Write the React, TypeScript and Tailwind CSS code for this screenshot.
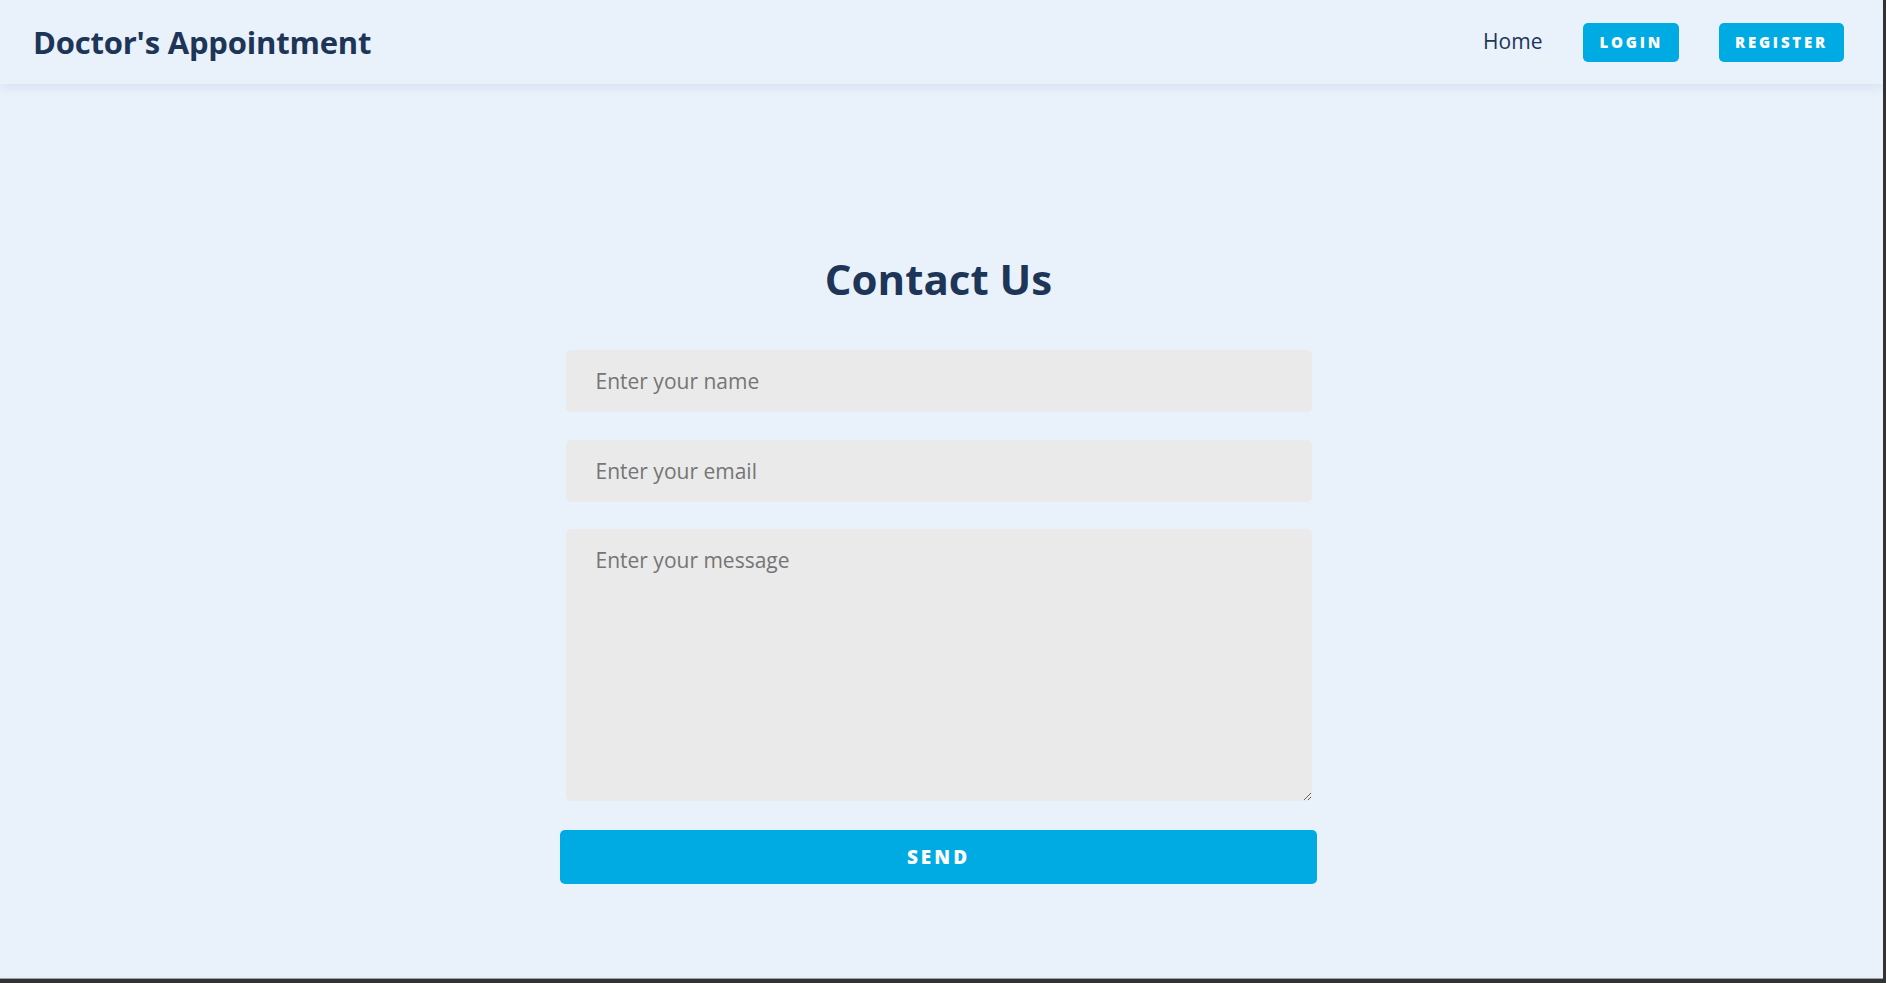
import React from 'react'

const font = { fontFamily: '"Open Sans", "Noto Sans", sans-serif' }

const Navbar: React.FC = () => {
  return (
    <header className="h-[84px] flex items-center justify-between pl-[33px] pr-[39px] bg-[#e9f1fb] shadow-[0_4px_10px_rgba(30,60,110,0.08)] relative z-10">
      <h1 className="text-[31px] font-bold text-[#1d3557] tracking-[-0.2px]">Doctor's Appointment</h1>
      <nav className="flex items-center">
        <a href="#" className="text-[21px] text-[#1d3557] mr-[41px]">Home</a>
        <button className="h-[39px] px-[16px] rounded-[5px] bg-[#00abe3] text-white text-[15px] font-extrabold tracking-[2.8px] mr-[40px]">
          LOGIN
        </button>
        <button className="h-[39px] px-[16px] rounded-[5px] bg-[#00abe3] text-white text-[15px] font-extrabold tracking-[2.8px]">
          REGISTER
        </button>
      </nav>
    </header>
  )
}

const ContactForm: React.FC = () => {
  return (
    <div className="w-[757px] mx-auto flex flex-col">
      <h2 className="text-[42px] leading-[48px] font-bold text-[#1d3557] text-center mb-[47px]">Contact Us</h2>
      <input
        type="text"
        placeholder="Enter your name"
        className="mx-[5.5px] h-[62px] px-[30px] rounded-[5px] bg-[#eaeaea] text-[21px] placeholder:text-[#757575] outline-none"
      />
      <input
        type="email"
        placeholder="Enter your email"
        className="mx-[5.5px] mt-[28px] h-[62px] px-[30px] rounded-[5px] bg-[#eaeaea] text-[21px] placeholder:text-[#757575] outline-none"
      />
      <textarea
        placeholder="Enter your message"
        className="mx-[5.5px] mt-[27px] h-[272px] px-[30px] py-[16px] leading-[30px] rounded-[5px] bg-[#eaeaea] text-[21px] placeholder:text-[#757575] outline-none"
      />
      <button className="mt-[29px] h-[54px] rounded-[5px] bg-[#00abe3] text-white text-[19px] font-extrabold tracking-[3px]">
        SEND
      </button>
    </div>
  )
}

export default function App() {
  return (
    <div className="w-[1886px] h-[983px] bg-[#333333] overflow-hidden" style={font}>
      <div className="w-[1883px] h-[979px] bg-[#e9f1fb] border-b border-[#9aa0a8]">
        <Navbar />
        <main className="pt-[171px] pr-[6px]">
          <ContactForm />
        </main>
      </div>
    </div>
  )
}
